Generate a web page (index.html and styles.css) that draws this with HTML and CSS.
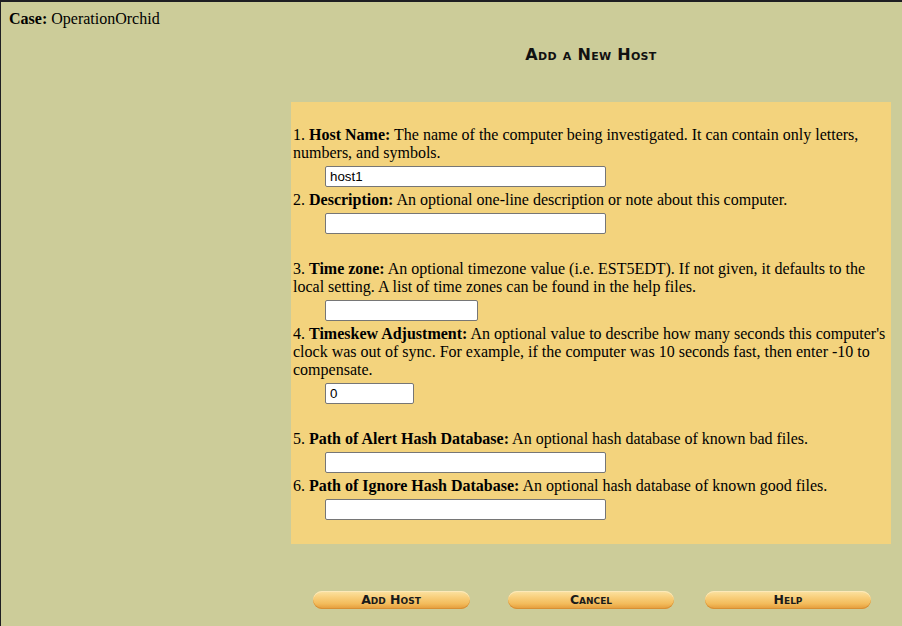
FILE: index.html
```html
<!DOCTYPE html>
<html>
<head>
<meta charset="utf-8">
<title>Add a New Host</title>
<link rel="stylesheet" href="styles.css">
</head>
<body>
<div class="frame">
  <div class="case"><b>Case:</b> OperationOrchid</div>
  <div class="main">
    <div class="title">Add a New Host</div>
    <form class="panel">
      <div class="item">
        <p class="desc">1. <b>Host Name:</b> The name of the computer being investigated. It can contain only letters, numbers, and symbols.</p>
        <input class="field wide" type="text" value="host1">
      </div>
      <div class="item">
        <p class="desc">2. <b>Description:</b> An optional one-line description or note about this computer.</p>
        <input class="field wide" type="text" value="">
      </div>
      <div class="spacer"></div>
      <div class="item">
        <p class="desc">3. <b>Time zone:</b> An optional timezone value (i.e. EST5EDT). If not given, it defaults to the local setting. A list of time zones can be found in the help files.</p>
        <input class="field mid" type="text" value="">
      </div>
      <div class="item">
        <p class="desc">4. <b>Timeskew Adjustment:</b> An optional value to describe how many seconds this computer's clock was out of sync. For example, if the computer was 10 seconds fast, then enter -10 to compensate.</p>
        <input class="field small" type="text" value="0">
      </div>
      <div class="spacer"></div>
      <div class="item">
        <p class="desc">5. <b>Path of Alert Hash Database:</b> An optional hash database of known bad files.</p>
        <input class="field wide" type="text" value="">
      </div>
      <div class="item">
        <p class="desc">6. <b>Path of Ignore Hash Database:</b> An optional hash database of known good files.</p>
        <input class="field wide" type="text" value="">
      </div>
    </form>
    <div class="buttons">
      <div class="cell"><button class="btn btn-add" type="button">Add Host</button></div>
      <div class="cell"><button class="btn btn-wide" type="button">Cancel</button></div>
      <div class="cell cell-help"><button class="btn btn-wide" type="button">Help</button></div>
    </div>
  </div>
</div>
</body>
</html>
```

FILE: styles.css
```css
html, body {
  margin: 0;
  padding: 0;
  background: #cccc99;
}
body {
  font-family: "Liberation Serif", "Times New Roman", serif;
  font-size: 16px;
  color: #000;
}
.frame {
  border-top: 2px solid #1e1e22;
  border-left: 1px solid #1e1e22;
  padding: 8px;
  min-height: 626px;
  box-sizing: border-box;
}
.case {
  line-height: 18px;
}
.main {
  margin-left: 282px;
  width: 600px;
}
.title {
  margin-top: 18px;
  text-align: center;
  font-family: "DejaVu Sans", sans-serif;
  font-weight: bold;
  font-variant: small-caps;
  font-size: 16px;
  line-height: 18px;
  letter-spacing: 0.3px;
  color: #111;
}
.panel {
  margin: 38px 0 0;
  background: #f3d37d;
  padding: 23px 2px 21px;
}
.desc {
  margin: 0;
  padding-top: 1px;
  line-height: 18px;
}
.field {
  display: block;
  box-sizing: border-box;
  height: 21px;
  margin: 4px 0 3px 32px;
  padding: 1px 4px;
  border: 1px solid #767676;
  border-radius: 2px;
  background: #fff;
  font-family: "Liberation Sans", Arial, sans-serif;
  font-size: 13.333px;
  color: #000;
}
.wide { width: 281px; }
.mid { width: 153px; }
.small { width: 89px; }
.spacer {
  height: 22px;
}
.buttons {
  display: flex;
  margin-top: 47px;
}
.cell {
  width: 200px;
  display: flex;
  justify-content: center;
}
.cell-help {
  justify-content: flex-start;
  padding-left: 14px;
  box-sizing: border-box;
}
.btn {
  height: 18px;
  padding: 0;
  border: none;
  border-radius: 9px;
  background: linear-gradient(to bottom, #fbe3a4 0%, #f8cf7c 35%, #f3bc5c 70%, #e39a38 100%);
  box-shadow: inset 0 -1px 0 #d88f33, inset 0 1px 0 #fde9b8;
  font-family: "DejaVu Sans", sans-serif;
  font-weight: bold;
  font-variant: small-caps;
  font-size: 12.5px;
  line-height: 18px;
  color: #1a1a1a;
  text-align: center;
}
.btn-add { width: 157px; }
.btn-wide { width: 166px; }
```
